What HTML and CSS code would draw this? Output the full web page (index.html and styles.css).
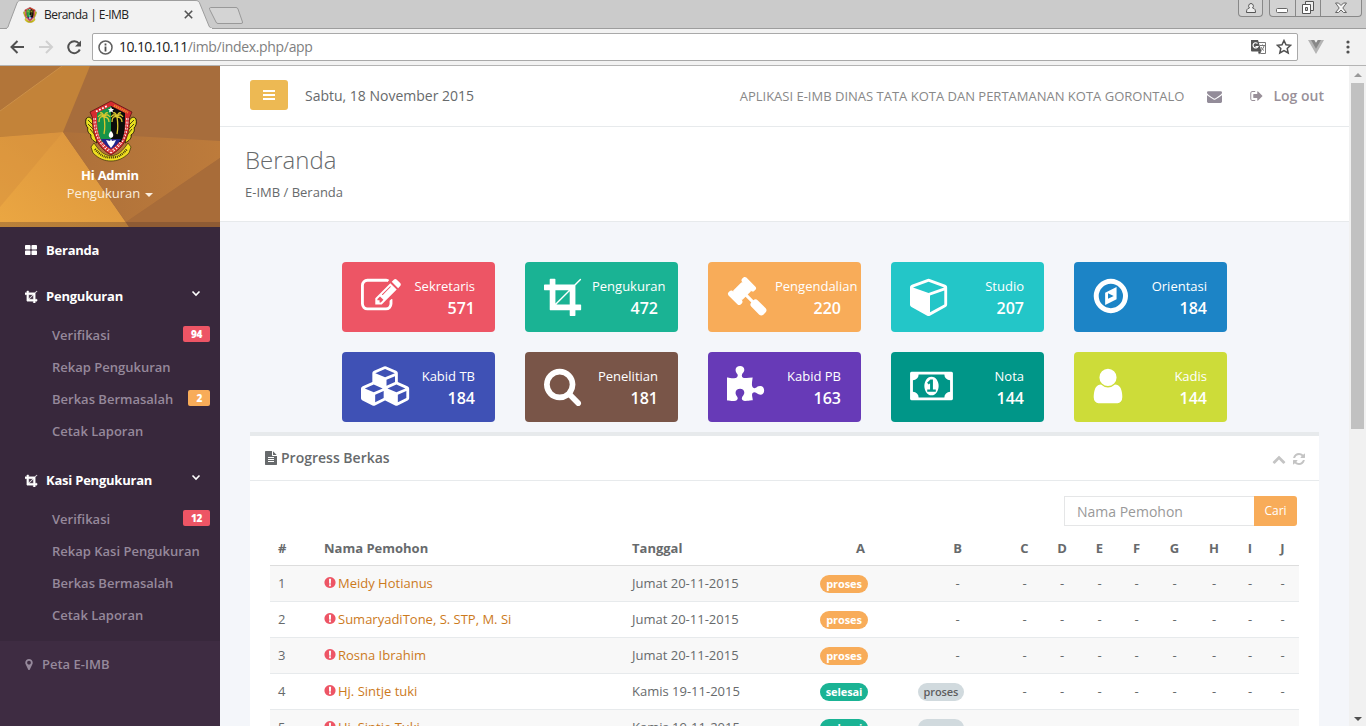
FILE: index.html
```html
<!DOCTYPE html>
<html lang="id">
<head>
<meta charset="utf-8">
<title>Beranda | E-IMB</title>
<link rel="stylesheet" href="styles.css">
</head>
<body>
<svg class="sprite" aria-hidden="true">
<symbol id="edit" viewBox="0 0 1792 1792"><path d="M888 1184l116-116-152-152-116 116v56h96v96h56zm440-720q-16-16-33 1l-350 350q-17 17-1 33t33-1l350-350q17-17 1-33zm80 594v190q0 119-84.5 203.5t-203.5 84.5h-832q-119 0-203.5-84.5t-84.5-203.5v-832q0-119 84.5-203.5t203.5-84.5h832q63 0 117 25 15 7 18 23 3 17-9 29l-49 49q-14 14-32 8-23-6-45-6h-832q-66 0-113 47t-47 113v832q0 66 47 113t113 47h832q66 0 113-47t47-113v-126q0-13 9-22l64-64q15-15 35-7t20 29zm-96-738l288 288-672 672h-288v-288zm444 132l-92 92-288-288 92-92q28-28 68-28t68 28l152 152q28 28 28 68t-28 68z"/></symbol>
<symbol id="crop" viewBox="64 0 1792 1792"><path d="M621 1280h595v-595zm-45-45l595-595h-595v595zm1152 77v192q0 14-9 23t-23 9h-224v224q0 14-9 23t-23 9h-192q-14 0-23-9t-9-23v-224h-864q-14 0-23-9t-9-23v-864h-224q-14 0-23-9t-9-23v-192q0-14 9-23t23-9h224v-224q0-14 9-23t23-9h192q14 0 23 9t9 23v224h851l246-247q10-9 23-9t23 9q9 10 9 23t-9 23l-247 246v851h224q14 0 23 9t9 23z"/></symbol>
<symbol id="gavel" viewBox="0 0 1792 1792"><path d="M1771 1536q0 53-37 90l-107 108q-39 37-91 37-53 0-90-37l-363-364q-38-36-38-90 0-53 43-96l-256-256-126 126q-14 14-34 14t-34-14q2 2 12.500 12t12.500 13 10 11.500 10 13.500 6 13.500 5.500 16.500 1.500 18q0 38-28 68-3 3-16.500 18t-19 20.500-18.500 16.500-22 15.500-22 9-26 4.500q-40 0-68-28l-408-408q-28-28-28-68 0-13 4.500-26t9-22 15.500-22 16.500-18.500 20.500-19 18-16.500q30-28 68-28 10 0 18 1.500t16.500 5.500 13.500 6 13.500 10 11.500 10 13 12.500 12 12.500q-14-14-14-34t14-34l348-348q14-14 34-14t34 14q-2-2-12.500-12t-12.500-13-10-11.500-10-13.500-6-13.500-5.500-16.500-1.500-18q0-38 28-68 3-3 16.500-18t19-20.500 18.500-16.500 22-15.500 22-9 26-4.500q40 0 68 28l408 408q28 28 28 68 0 13-4.500 26t-9 22-15.500 22-16.500 18.500-20.500 19-18 16.500q-30 28-68 28-10 0-18-1.500t-16.500-5.500-13.500-6-13.500-10-11.500-10-13-12.500-12-12.500q14 14 14 34t-14 34l-126 126 256 256q43-43 96-43 52 0 91 37l363 363q37 39 37 91z"/></symbol>
<symbol id="cube" viewBox="0 0 1792 1792"><path d="M896 1629l640-349v-636l-640 233v752zm-64-865l698-254-698-254-698 254zm832-252v768q0 35-18 65t-49 47l-704 384q-28 16-61 16t-61-16l-704-384q-31-17-49-47t-18-65v-768q0-40 23-73t61-47l704-256q22-8 44-8t44 8l704 256q38 14 61 47t23 73z"/></symbol>
<symbol id="compass" viewBox="96 0 1792 1792"><path fill-rule="evenodd" d="M768 1024l256-128-256-128zM1152 497v542l-512 256v-542zM896 352a544 544 0 1 0 0 1088 544 544 0 1 0 0-1088zM896 128a768 768 0 1 1 0 1536 768 768 0 1 1 0-1536z"/></symbol>
<symbol id="cubes" viewBox="0 0 2304 1792"><path d="M640 1632l384-192v-314l-384 164v342zm-64-454l404-173-404-173-404 173zm1088 454l384-192v-314l-384 164v342zm-64-454l404-173-404-173-404 173zm-448-293l384-165v-266l-384 164v267zm-64-379l441-189-441-189-441 189zm1088 518v416q0 36-19 67t-52 47l-448 224q-25 14-57 14t-57-14l-448-224q-4-2-7-4-2 2-7 4l-448 224q-25 14-57 14t-57-14l-448-224q-33-16-52-47t-19-67v-416q0-38 21.500-70t56.500-48l434-186v-400q0-38 21.500-70t56.500-48l448-192q23-10 50-10t50 10l448 192q35 16 56.500 48t21.500 70v400l434 186q36 16 57 48t21 70z"/></symbol>
<symbol id="search" viewBox="64 0 1792 1792"><path d="M1216 832q0-185-131.500-316.500t-316.500-131.500-316.500 131.500-131.500 316.500 131.500 316.500 316.500 131.500 316.500-131.500 131.500-316.500zm512 832q0 52-38 90t-90 38q-54 0-90-38l-343-342q-179 124-399 124-143 0-273.500-55.500t-225-150-150-225-55.500-273.500 55.500-273.500 150-225 225-150 273.500-55.500 273.500 55.500 225 150 150 225 55.500 273.500q0 220-124 399l343 343q37 37 37 90z"/></symbol>
<symbol id="puzzle" viewBox="64 0 1792 1792"><path d="M1728 1098q0 81-44.500 135t-123.500 54q-41 0-77.500-17.500t-59-38-56.500-38-71-17.500q-110 0-110 124 0 39 16 115t15 115v5q-22 0-33 1-34 3-97.500 11.500t-115.500 13.500-98 5q-61 0-103-26.500t-42-83.500q0-37 17.500-71t38-56.500 38-59 17.500-77.500q0-79-54-123.500t-135-44.500q-84 0-143 45.500t-59 127.500q0 43 15 83t33.500 64.500 33.500 53 15 50.500q0 45-46 89-37 35-117 35-95 0-245-24-9-2-27.500-4t-27.500-4l-13-2q-1 0-3-1-2 0-2-1v-1024q2 1 17.500 3.500t34 5 21.500 3.500q150 24 245 24 80 0 117-35 46-44 46-89 0-22-15-50.500t-33.500-53-33.500-64.500-15-83q0-82 59-127.500t144-45.500q80 0 134 44.500t54 123.500q0 41-17.500 77.500t-38 59-38 56.500-17.500 71q0 57 42 83.500t103 26.500q64 0 180-15t163-17v2q-1 2-3.500 17.500t-5 34-3.500 21.500q-24 150-24 245 0 80 35 117 44 46 89 46 22 0 50.500-15t53-33.500 64.500-33.500 83-15q82 0 127.500 59t45.500 143z"/></symbol>
<symbol id="money" viewBox="0 0 1920 1792"><path d="M768 1152h384v-96h-128v-448h-114l-148 137 77 80q42-37 55-57h2v288h-128v96zm512-256q0 70-21 142t-59.500 134-101.500 101-138 39-138-39-101.500-101-59.500-134-21-142 21-142 59.500-134 101.500-101 138-39 138 39 101.500 101 59.500 134 21 142zm512 256v-512q-106 0-181-75t-75-181h-1152q0 106-75 181t-181 75v512q106 0 181 75t75 181h1152q0-106 75-181t181-75zm128-832v1152q0 26-19 45t-45 19h-1792q-26 0-45-19t-19-45v-1152q0-26 19-45t45-19h1792q26 0 45 19t19 45z"/></symbol>
<symbol id="user" viewBox="224 0 1792 1792"><path d="M1536 1399q0 109-62.500 187t-150.500 78h-854q-88 0-150.500-78t-62.500-187q0-85 8.500-160.500t31.500-152 58.500-131 94-89 134.500-34.500q131 128 313 128t313-128q76 0 134.500 34.500t94 89 58.500 131 31.500 152 8.500 160.500zm-256-887q0 159-112.500 271.500t-271.500 112.500-271.500-112.500-112.500-271.500 112.500-271.500 271.500-112.500 271.500 112.500 112.500 271.500z"/></symbol>
<symbol id="refresh" viewBox="128 0 1536 1792"><path d="M1639 1056q0 5-1 7-64 268-268 434.500t-478 166.500q-146 0-282.500-55t-243.500-157l-129 129q-19 19-45 19t-45-19-19-45v-448q0-26 19-45t45-19h448q26 0 45 19t19 45-19 45l-137 137q71 66 161 102t187 36q134 0 250-65t186-179q11-17 53-117 8-23 30-23h192q13 0 22.500 9.500t9.500 22.500zm25-800v448q0 26-19 45t-45 19h-448q-26 0-45-19t-19-45 19-45l138-138q-148-137-349-137-134 0-250 65t-186 179q-11 17-53 117-8 23-30 23h-199q-13 0-22.500-9.500t-9.500-22.500v-7q65-268 270-434.500t480-166.500q146 0 284 55.500t245 156.500l130-129q19-19 45-19t45 19 19 45z"/></symbol>
<symbol id="chev-up" viewBox="0 0 1792 1792"><path d="M1683 1331l-166 165q-19 19-45 19t-45-19l-531-531-531 531q-19 19-45 19t-45-19l-166-165q-19-19-19-45.500t19-45.500l742-741q19-19 45-19t45 19l742 741q19 19 19 45.500t-19 45.500z"/></symbol>
<symbol id="excl" viewBox="128 0 1536 1792"><path d="M896 128q209 0 385.500 103t279.500 279.500 103 385.500-103 385.500-279.500 279.500-385.500 103-385.500-103-279.500-279.500-103-385.500 103-385.500 279.500-279.500 385.500-103zm128 1247v-190q0-14-9-23.500t-22-9.500h-192q-13 0-23 10t-10 23v190q0 13 10 23t23 10h192q13 0 22-9.500t9-23.500zm-2-344l18-621q0-12-10-18-10-8-24-8h-220q-14 0-24 8-10 6-10 18l17 621q0 10 10 17.500t24 7.500h185q14 0 23.500-7.500t10.500-17.500z"/></symbol>
<symbol id="envelope" viewBox="0 0 1792 1792"><path d="M1792 710v794q0 66-47 113t-113 47h-1472q-66 0-113-47t-47-113v-794q44 49 101 87 362 246 497 345 57 42 92.500 65.500t94.500 48 110 24.500h2q51 0 110-24.500t94.500-48 92.500-65.500q170-123 498-345 57-39 100-87zm0-294q0 79-49 151t-122 123q-376 261-468 325-10 7-42.500 31t-54 38.500-52 32.500-57.500 27-50 9h-2q-23 0-50-9t-57.500-27-52-32.500-54-38.500-42.500-31q-91-64-262-182.500t-205-142.500q-62-42-117-115.500t-55-136.500q0-78 41.500-130t118.500-52h1472q65 0 112.500 47t47.500 113z"/></symbol>
<symbol id="signout" viewBox="64 0 1600 1792"><path d="M704 1440q0 4 1 20t.5 26.500-3 23.500-10 19.500-20.500 6.500h-320q-119 0-203.500-84.500t-84.500-203.500v-704q0-119 84.500-203.500t203.500-84.500h320q13 0 22.500 9.500t9.500 22.500q0 4 1 20t.5 26.500-3 23.500-10 19.500-20.500 6.500h-320q-66 0-113 47t-47 113v704q0 66 47 113t113 47h312l11.500 1 11.500 3 8 5.500 7 9 2 13.500zm928-544q0 26-19 45l-544 544q-19 19-45 19t-45-19-19-45v-288h-448q-26 0-45-19t-19-45v-384q0-26 19-45t45-19h448v-288q0-26 19-45t45-19 45 19l544 544q19 19 19 45z"/></symbol>
<symbol id="marker" viewBox="384 0 1024 1792"><path d="M1152 640q0-106-75-181t-181-75-181 75-75 181 75 181 181 75 181-75 75-181zm256 0q0 109-33 179l-364 774q-16 33-47.500 52t-67.500 19-67.500-19-46.500-52l-365-774q-33-70-33-179 0-212 150-362t362-150 362 150 150 362z"/></symbol>
<symbol id="th" viewBox="64 0 1664 1792"><path d="M832 1024v384q0 52-38 90t-90 38h-512q-52 0-90-38t-38-90v-384q0-52 38-90t90-38h512q52 0 90 38t38 90zm0-768v384q0 52-38 90t-90 38h-512q-52 0-90-38t-38-90v-384q0-52 38-90t90-38h512q52 0 90 38t38 90zm896 768v384q0 52-38 90t-90 38h-512q-52 0-90-38t-38-90v-384q0-52 38-90t90-38h512q52 0 90 38t38 90zm0-768v384q0 52-38 90t-90 38h-512q-52 0-90-38t-38-90v-384q0-52 38-90t90-38h512q52 0 90 38t38 90z"/></symbol>
<symbol id="file" viewBox="128 0 1536 1792"><path d="M1596 476q14 14 28 36h-472v-472q22 14 36 28zm-476 164h544v1056q0 40-28 68t-68 28h-1344q-40 0-68-28t-28-68v-1600q0-40 28-68t68-28h800v544q0 40 28 68t68 28zm160 736v-64q0-14-9-23t-23-9h-704q-14 0-23 9t-9 23v64q0 14 9 23t23 9h704q14 0 23-9t9-23zm0-256v-64q0-14-9-23t-23-9h-704q-14 0-23 9t-9 23v64q0 14 9 23t23 9h704q14 0 23-9t9-23zm0-256v-64q0-14-9-23t-23-9h-704q-14 0-23 9t-9 23v64q0 14 9 23t23 9h704q14 0 23-9t9-23z"/></symbol>
<symbol id="angle" viewBox="0 0 10 7"><path fill="none" stroke="currentColor" stroke-width="1.600" d="M1.500 1.500L5 5l3.500-3.500"/></symbol>
<symbol id="emblem" viewBox="0 0 54 62">
<path d="M9 21C7 17 4 16 2 19c-1 4 0 7 2 9-1 2 0 5 3 7-1 3 2 6 6 8zM45 21c2-4 5-5 7-2 1 4 0 7-2 9 1 2 0 5-3 7 1 3-2 6-6 8z" fill="#e8e020" stroke="#2a2208" stroke-width="1"/>
<path d="M4 20l5 5M4 24l6 6M6 29l5 6M50 20l-5 5M50 24l-6 6M48 29l-5 6" stroke="#3a300a" stroke-width=".9"/>
<path d="M10 43C16 52 20 55 27 56c7-1 11-4 17-13l3 4-2 6C39 59 33 61 27 61 21 61 15 59 9 53l-2-6z" fill="#f0e020" stroke="#3a300a" stroke-width=".7"/>
<path d="M27 1L48 12 45.500 18C46 35 41 47 27 55 13 47 8 35 8.500 18L6 12z" fill="#d52b2f" stroke="#5c1512" stroke-width=".8"/>
<path d="M10.700 18C11 34 15 44 27 52 39 44 43 34 43.300 18" fill="none" stroke="#fff" stroke-width="2.400" stroke-dasharray="2 1.200"/>
<path d="M10.700 18C11 34 15 44 27 52 39 44 43 34 43.300 18" fill="none" stroke="#d52b2f" stroke-width=".9"/>
<path d="M13 13L27 6v36H18C14 34 13 27 13 17z" fill="#179347"/>
<path d="M27 6l14 7v4c0 10 0 17-4 25H27z" fill="#0c0d0b"/>
<path d="M17 39H37C34 44 32 46 27 49 22 46 20 44 17 39z" fill="#22258d"/>
<path d="M12 11.500l12-6" stroke="#fff" stroke-width="1.700" stroke-dasharray="1.800 1.600"/><path d="M30 5.500l14 7" stroke="#ef8a2a" stroke-width="2.400" stroke-dasharray="1.400 .7"/>
<path d="M27 7l1 2h2l-1.500 1.500.5 2-2-1-2 1 .5-2L24 9h2zM27 31c3 3 3 6 0 7-3-1-3-4 0-7zM22 40l4 1 1-2 1 2 4-1-2 4-3 4-3-4z" fill="#fff"/>
<path id="palm" d="M20 34c1-5 1-11 0-17M20 17c-2-3-4-3-6 0m6 0c2-3 4-3 6 0m-6 0c-3-1-5 0-5 5m5-5c3 0 5 1 5 5m-5-5c0-2-2-5-4-4m4 4c0-2 2-5 4-4" fill="none" stroke="#dac82f" stroke-width="1.300"/>
<use href="#palm" x="13"/>
<path d="M11 49c5 6 9 8.500 16 8.500S38 55 43 49" fill="none" stroke="#3a300a" stroke-width="2.200" stroke-dasharray="1 .9"/>
</symbol>
</svg>

<div class="browser">
  <div class="tabstrip">
    <svg class="tabshape" width="250" height="29" viewBox="0 0 250 29"><path d="M0 28.500H5C8 28.500 8 27 9 24L17 3C18 1 19 .5 21 .5H195C198 .5 199 1 200 4L209 26C210 28 211 28.500 214 28.500" fill="#f2f2f2" stroke="#9d9d9d"/><path d="M7 29H212V28H7z" fill="#f2f2f2"/><path d="M210.500 7.500H236Q237.500 7.500 238 9L242.500 22Q243 23.500 241 23.500H218Q216.500 23.500 216 22L209.700 9.500Q209 7.500 210.500 7.500z" fill="#d4d4d4" stroke="#999"/></svg>
    <div class="tab"><svg width="16" height="16"><use href="#emblem"/></svg><span class="tabtitle">Beranda | E-IMB</span><svg class="tabx" width="9" height="9"><path d="M.8.8l7.400 7.400M8.200.8L.8 8.200" stroke="#555" stroke-width="1.600"/></svg></div>
    <div class="winbtns">
      <div class="wb profile"><svg width="12" height="12" viewBox="0 0 12 12"><path d="M6 1.500a2.500 2.500 0 0 1 1.500 4.400C10 6.500 10.500 8 10.500 10.500h-9C1.500 8 2 6.500 4.500 5.900A2.500 2.500 0 0 1 6 1.500z" fill="#eee" stroke="#555"/></svg></div>
      <div class="wb group">
        <span class="min"><svg width="13" height="5"><rect x=".5" y=".5" width="11" height="4" rx="1" fill="#fff" stroke="#666"/></svg></span>
        <span class="max"><svg width="14" height="14"><path d="M4.500.500h8v9h-8z" fill="#eee" stroke="#555"/><path d="M1.500 3.500h8v9h-8z" fill="#fff" stroke="#555"/><path d="M4.500 6.500h2v3h-2z" fill="#ccc" stroke="#555"/></svg></span>
        <span class="cls"><svg width="12" height="12"><path d="M.5 1h3l2.500 2.500L8.500 1h3L7.800 6l3.700 4.500h-3L6 8l-2.500 2.500h-3L4.200 6z" fill="#f4f4f4" stroke="#666"/></svg></span>
      </div>
    </div>
  </div>
  <div class="toolbar">
    <svg width="15" height="14" viewBox="0 0 15 14"><path d="M14 7H2M7.500 1L1.500 7l6 6" fill="none" stroke="#505050" stroke-width="2"/></svg>
    <svg class="fwd" width="15" height="14" viewBox="0 0 15 14"><path d="M0 7h13M7 1l6 6-6 6" fill="none" stroke="#d0d0d0" stroke-width="2"/></svg>
    <svg class="rel" width="15" height="15" viewBox="0 0 15 15"><path d="M12.800 9.500A6 6 0 1 1 12 3.500" fill="none" stroke="#505050" stroke-width="2"/><path d="M14 .5v6H8z" fill="#505050"/></svg>
    <div class="urlbar">
      <svg width="15" height="15"><circle cx="7.500" cy="7.500" r="6.500" fill="none" stroke="#606060" stroke-width="1.500"/><path d="M7.500 6.500v5M7.500 3.500v2" stroke="#505050" stroke-width="1.800"/></svg>
      <span class="url"><b>10.10.10.11</b>/imb/index.php/app</span>
      <svg class="trans" width="15" height="15"><path d="M6.500 2.500h8v11h-5z" fill="#fff" stroke="#777"/><path d="M0 0h7l3.500 11.500H1Q0 11.500 0 10.500z" fill="#555"/><path d="M6.500 3.500A2.600 2.600 0 1 0 7 6.500H4.500" fill="none" stroke="#fff" stroke-width="1.200"/><path d="M9 5.500h5M11.500 4.500v1M13 6q-.5 3-3 4.500M10 7q1 2.500 3 3.500" stroke="#777" fill="none"/><path d="M7 11.500h3l-2 3z" fill="#444"/></svg>
      <svg width="16" height="16" viewBox="0 0 16 16"><path d="M8 1.500l2 4.300 4.600.5-3.400 3.100 1 4.600L8 11.700 3.800 14l1-4.600L1.400 6.300 6 5.800z" fill="none" stroke="#505050" stroke-width="1.500"/></svg>
    </div>
    <svg class="vue" width="16" height="14" viewBox="0 0 16 14"><path d="M0 0h6l2 3 2-3h6L8 14z" fill="#b4b4b4"/><path d="M3 0h3.200L8 3l1.800-3H13L8 8.700z" fill="#888"/></svg>
    <svg class="dots" width="4" height="14"><circle cx="2" cy="2" r="1.600" fill="#505050"/><circle cx="2" cy="7" r="1.600" fill="#505050"/><circle cx="2" cy="12" r="1.600" fill="#505050"/></svg>
  </div>
</div>

<div class="page">
  <nav class="sidebar">
    <div class="profilebox">
      <svg class="profilebg" width="220" height="161" viewBox="0 0 220 161" preserveAspectRatio="none">
        <defs><linearGradient id="o" x1="0" y1="1" x2="1" y2="0"><stop offset="0" stop-color="#eba742"/><stop offset="1" stop-color="#d9923d"/></linearGradient><linearGradient id="m" x1="0" y1="0" x2="1" y2="0"><stop offset="0" stop-color="#ad703a"/><stop offset="1" stop-color="#bd7b3b"/></linearGradient></defs>
        <path fill="#a76d3c" d="M0 0h220v161H0z"/><path fill="#b27539" d="M0 0H62L0 45z"/><path fill="#c38339" d="M62 0H90L63 66 0 71V45z"/><path d="M62 0L0 45" stroke="#d49a50" stroke-width=".7"/>
        <path fill="url(#o)" d="M0 71L63 66 129 161H0z"/><path fill="#d18c3c" d="M63 66L0 141V71z" opacity=".4"/>
        <path fill="url(#m)" d="M63 66L220 75V92L126 156z"/><path fill="#a86c39" d="M220 92v69H129l-3-5z"/><path d="M0 156h220v5H0z" fill="#5f3b2a" opacity=".35"/>
      </svg>
      <svg class="logo" width="54" height="62"><use href="#emblem"/></svg>
      <strong>Hi Admin</strong>
      <span class="role">Pengukuran <i class="caret"></i></span>
    </div>
    <div class="active">
      <a class="item"><svg width="12" height="13"><use href="#th"/></svg>Beranda</a>
      <a class="item"><svg class="cropicon" width="13" height="13"><use href="#crop"/></svg>Pengukuran<svg class="arrow" width="10" height="7"><use href="#angle"/></svg></a>
      <div class="sub">
        <a>Verifikasi<b class="label red">94</b></a><a>Rekap Pengukuran</a><a>Berkas Bermasalah<b class="label orange">2</b></a><a>Cetak Laporan</a>
      </div>
      <a class="item"><svg class="cropicon" width="13" height="13"><use href="#crop"/></svg>Kasi Pengukuran<svg class="arrow" width="10" height="7"><use href="#angle"/></svg></a>
      <div class="sub">
        <a>Verifikasi<b class="label red">12</b></a><a>Rekap Kasi Pengukuran</a><a>Berkas Bermasalah</a><a>Cetak Laporan</a>
      </div>
    </div>
    <a class="item peta"><svg width="8" height="13"><use href="#marker"/></svg>Peta E-IMB</a>
  </nav>

  <main class="main">
    <header class="topbar">
      <span class="burger"><i></i><i></i><i></i></span>
      <span class="date">Sabtu, 18 November 2015</span>
      <span class="apptitle">APLIKASI E-IMB DINAS TATA KOTA DAN PERTAMANAN KOTA GORONTALO</span>
      <svg class="mail" width="15" height="15"><use href="#envelope"/></svg>
      <span class="logout"><svg width="13" height="14"><use href="#signout"/></svg>Log out</span>
    </header>
    <section class="heading"><h2>Beranda</h2><p>E-IMB / Beranda</p></section>
    <section class="cards">
      <div class="card c1"><svg width="40" height="40"><use href="#edit"/></svg><div><span>Sekretaris</span><b>571</b></div></div>
      <div class="card c2"><svg width="40" height="40"><use href="#crop"/></svg><div><span>Pengukuran</span><b>472</b></div></div>
      <div class="card c3"><svg width="40" height="40"><use href="#gavel"/></svg><div><span>Pengendalian</span><b>220</b></div></div>
      <div class="card c4"><svg width="40" height="40"><use href="#cube"/></svg><div><span>Studio</span><b>207</b></div></div>
      <div class="card c5"><svg width="40" height="40"><use href="#compass"/></svg><div><span>Orientasi</span><b>184</b></div></div>
      <div class="card c6"><svg width="51" height="40"><use href="#cubes"/></svg><div><span>Kabid TB</span><b>184</b></div></div>
      <div class="card c7"><svg width="40" height="40"><use href="#search"/></svg><div><span>Penelitian</span><b>181</b></div></div>
      <div class="card c8"><svg width="40" height="40"><use href="#puzzle"/></svg><div><span>Kabid PB</span><b>163</b></div></div>
      <div class="card c9"><svg width="43" height="40"><use href="#money"/></svg><div><span>Nota</span><b>144</b></div></div>
      <div class="card c10"><svg width="40" height="40"><use href="#user"/></svg><div><span>Kadis</span><b>144</b></div></div>
    </section>
    <section class="ibox">
      <div class="ibox-title"><svg width="12" height="14"><use href="#file"/></svg><h5>Progress Berkas</h5><svg class="up" width="14" height="14"><use href="#chev-up"/></svg><svg width="12" height="14"><use href="#refresh"/></svg></div>
      <div class="ibox-body">
        <div class="searchrow"><span class="input">Nama Pemohon</span><span class="btn">Cari</span></div>
        <table>
          <colgroup><col class="w46"><col class="w308"><col class="w188"><col class="w97"><col class="w97"><col class="w37"><col class="w38"><col class="w37"><col class="w37"><col class="w39"><col class="w40"><col class="w32"><col class="w33"></colgroup>
          <thead><tr><th>#</th><th>Nama Pemohon</th><th>Tanggal</th><th>A</th><th>B</th><th>C</th><th>D</th><th>E</th><th>F</th><th>G</th><th>H</th><th>I</th><th>J</th></tr></thead>
          <tbody>
            <tr><td>1</td><td><a><svg width="12" height="13"><use href="#excl"/></svg>Meidy Hotianus</a></td><td>Jumat 20-11-2015</td><td><b class="badge warn">proses</b></td><td>-</td><td>-</td><td>-</td><td>-</td><td>-</td><td>-</td><td>-</td><td>-</td><td>-</td></tr>
            <tr><td>2</td><td><a><svg width="12" height="13"><use href="#excl"/></svg>SumaryadiTone, S. STP, M. Si</a></td><td>Jumat 20-11-2015</td><td><b class="badge warn">proses</b></td><td>-</td><td>-</td><td>-</td><td>-</td><td>-</td><td>-</td><td>-</td><td>-</td><td>-</td></tr>
            <tr><td>3</td><td><a><svg width="12" height="13"><use href="#excl"/></svg>Rosna Ibrahim</a></td><td>Jumat 20-11-2015</td><td><b class="badge warn">proses</b></td><td>-</td><td>-</td><td>-</td><td>-</td><td>-</td><td>-</td><td>-</td><td>-</td><td>-</td></tr>
            <tr><td>4</td><td><a><svg width="12" height="13"><use href="#excl"/></svg>Hj. Sintje tuki</a></td><td>Kamis 19-11-2015</td><td><b class="badge done">selesai</b></td><td><b class="badge plain">proses</b></td><td>-</td><td>-</td><td>-</td><td>-</td><td>-</td><td>-</td><td>-</td><td>-</td></tr>
            <tr><td>5</td><td><a><svg width="12" height="13"><use href="#excl"/></svg>Hj. Sintje Tuki</a></td><td>Kamis 19-11-2015</td><td><b class="badge done">selesai</b></td><td><b class="badge plain">proses</b></td><td>-</td><td>-</td><td>-</td><td>-</td><td>-</td><td>-</td><td>-</td><td>-</td></tr>
          </tbody>
        </table>
      </div>
    </section>
  </main>
  <div class="scroll"><i class="sup"></i><i class="thumb"></i><i class="sdown"></i></div>
</div>
</body>
</html>
```
FILE: styles.css
```css
* { box-sizing: border-box; }
html, body { margin: 0; height: 726px; overflow: hidden; }
body { font: 13px/18px "Open Sans", "Noto Sans", sans-serif; color: #676a6c; background: #fff; }
svg { fill: currentColor; flex: none; display: block; }
.sprite { position: absolute; width: 0; height: 0; }

/* browser frame */
.browser { height: 66px; background: #f2f2f2; border-bottom: 1px solid #b4b4b4; }
.tabstrip { position: relative; height: 29px; background: #cbcbcb; border-bottom: 1px solid #9d9d9d; display: flex; }
.tabshape { position: absolute; left: 0; top: 0; }
.tab { position: relative; display: flex; align-items: center; width: 193px; padding-left: 22px; height: 29px; }
.tabtitle { flex: 1; margin-left: 6px; font-size: 12px; letter-spacing: -.55px; color: #222; white-space: nowrap; }
.winbtns { margin-left: auto; display: flex; padding-right: 4px; gap: 6px; }
.wb { height: 17px; border: 1px solid #888; border-top: 0; border-radius: 0 0 4px 4px; background: #d2d2d2; display: flex; }
.profile { width: 25px; align-items: center; justify-content: center; }
.group span { display: flex; align-items: center; justify-content: center; border-left: 1px solid #888; height: 16px; }
.group .min { width: 25px; border: 0; padding-top: 5px; }
.group .max { width: 25px; }
.group .cls { width: 41px; }
.toolbar { height: 36px; display: flex; align-items: center; padding: 0 16px 0 10px; }
.fwd { margin-left: 14px; }
.rel { margin-left: 13px; }
.urlbar { margin-left: 10px; width: 1206px; height: 28px; background: #fff; border: 1px solid #a9a9a9; border-radius: 2px; display: flex; align-items: center; padding: 0 5px 0 5px; }
.url { flex: 1; margin-left: 6px; font-size: 14px; color: #808080; letter-spacing: -.32px; }
.url b { font-weight: 400; color: #222; letter-spacing: -.58px; }
.trans { margin-right: 10px; }
.vue { margin-left: 10px; }
.dots { margin-left: auto; }

.page { display: flex; height: 660px; overflow: hidden; }

/* sidebar */
.sidebar { width: 220px; flex: none; background: #3e2c42; color: #96899b; font-weight: 600; }
.profilebox { position: relative; height: 161px; display: flex; flex-direction: column; align-items: center; padding-top: 34px; color: #fff; }
.profilebg { position: absolute; left: 0; top: 0; }
.logo { position: relative; margin: 0 0 4px 2px; }
.profilebox strong { position: relative; font-weight: 700; letter-spacing: -.25px; }
.role { position: relative; font-weight: 400; color: #fbeedd; display: flex; align-items: center; gap: 5px; }
.caret { border: 4px solid transparent; border-top-color: #fbeedd; border-bottom: 0; margin-top: 3px; }
.active { background: #38283c; }
.item { display: flex; align-items: center; height: 46px; padding-left: 25px; gap: 9px; color: #fff; }
.active .item { font-weight: 700; letter-spacing: -.22px; }
.cropicon { margin-right: -1px; stroke: currentColor; stroke-width: 60px; }
.peta { color: #96899b; }
.arrow { margin: -5px 19px 0 auto; }
.sub { padding-bottom: 10px; }
.sub a { display: flex; height: 32px; align-items: center; justify-content: space-between; padding: 0 10px 0 52px; }
.label { font-size: 10px; line-height: 16px; padding: 0 8px; color: #fff; border-radius: 2px; margin-top: -2px; letter-spacing: -.3px; }
.red { background: #ed5565; }
.orange { background: #f8ac59; }

/* main column */
.main { flex: 1; background: #f4f6fa; min-width: 0; }
.topbar { height: 61px; background: #fff; border-bottom: 1px solid #e7eaec; display: flex; align-items: center; padding: 0 25px 0 30px; }
.burger { width: 38px; height: 30px; border-radius: 3px; background: #edb953; display: flex; flex-direction: column; align-items: center; justify-content: center; gap: 2px; margin-top: -2px; }
.burger i { width: 12px; height: 2px; background: #fff; }
.date { font-size: 14px; margin-left: 17px; }
.apptitle { margin-left: auto; color: #888; }
.mail { margin-left: 23px; color: #938c99; }
.logout { margin-left: 28px; display: flex; align-items: center; gap: 10px; font-size: 14px; font-weight: 600; color: #999099; }
.heading { height: 95px; background: #fff; border-bottom: 1px solid #e7eaec; padding: 20px 25px; }
h2 { margin: 0 0 9px; font-size: 24px; line-height: 26px; font-weight: 300; }
.heading p { margin: 0; padding-top: 1px; }
.cards { display: grid; grid-template-columns: repeat(5, 153px); gap: 20px 30px; padding: 40px 0 10px 122px; }
.card { height: 70px; border-radius: 4px; color: #fff; padding: 14px 20px 0 19px; display: flex; justify-content: space-between; }
.card div { width: 66px; margin-left: -20px; text-align: right; white-space: nowrap; padding-top: 1px; }
.card span, .card b { display: block; }
.card b { font-size: 16px; line-height: 26px; font-weight: 600; }
.c1 { background: #ed5565; } .c2 { background: #1ab394; } .c3 { background: #f8ac59; } .c4 { background: #23c6c8; } .c5 { background: #1c84c6; }
.c6 { background: #3f51b5; } .c7 { background: #795548; } .c8 { background: #673ab7; } .c9 { background: #009688; } .c10 { background: #cddc39; }

.ibox { margin: 0 30px; background: #fff; border-top: 4px solid #e7eaec; }
.ibox-title { height: 45px; border-bottom: 1px solid #e7eaec; display: flex; align-items: center; padding: 0 14px 0 15px; }
h5 { margin: 0 auto 0 4px; font-size: 14px; font-weight: 600; }
.ibox-title > svg:not(:first-child) { color: #c4c4c4; margin-top: 2px; }
.ibox-title .up { margin-right: 7px; }
.ibox-body { padding: 15px 20px 0; }
.searchrow { display: flex; justify-content: flex-end; height: 30px; padding-right: 2px; margin-bottom: 5px; }
.input { width: 190px; border: 1px solid #e5e6e7; border-right: 0; padding: 6px 12px; font-size: 14px; color: #999; }
.btn { width: 43px; background: #f8ac59; color: #fff; line-height: 30px; text-align: center; border-radius: 0 3px 3px 0; font-size: 12px; }
table { width: 1029px; table-layout: fixed; border-collapse: separate; border-spacing: 0; }
th { height: 35px; border-bottom: 1px solid #ddd; padding: 0 8px; text-align: left; font-weight: 700; }
td { height: 36px; padding: 0 8px 2px; border-bottom: 1px solid #e7eaec; }
th:nth-child(n+4) { text-align: center; padding: 0; }
td:nth-child(n+4) { text-align: center; padding: 0 0 2px; }
tbody tr:nth-child(odd) { background: #f8f8f8; }
td a { display: flex; align-items: center; gap: 2px; color: #cc7a1c; }
td a svg { color: #ed5565; }
.badge { display: inline-block; font-size: 11px; line-height: 18px; padding: 0 6px; border-radius: 9px; color: #fff; margin: 2px 33px 0 0; letter-spacing: -.1px; vertical-align: middle; }
.warn { background: #f8ac59; }
.done { background: #1ab394; }
.plain { background: #d1dade; color: #5e5e5e; font-weight: 600; }
.w46 { width: 46px; } .w308 { width: 308px; } .w188 { width: 188px; } .w97 { width: 97px; } .w38 { width: 38px; } .w37 { width: 37px; } .w39 { width: 39px; } .w40 { width: 40px; } .w32 { width: 32px; } .w33 { width: 33px; }

.scroll { width: 17px; flex: none; background: #f1f1f1; display: flex; flex-direction: column; align-items: center; }
.sup { border: 4px solid transparent; border-bottom-color: #999; border-top: 0; margin: 7px 0 6px; }
.thumb { width: 13px; height: 346px; background: #c1c1c1; }
.sdown { border: 4px solid transparent; border-top-color: #505050; border-bottom: 0; margin-top: auto; margin-bottom: 5px; }
```
